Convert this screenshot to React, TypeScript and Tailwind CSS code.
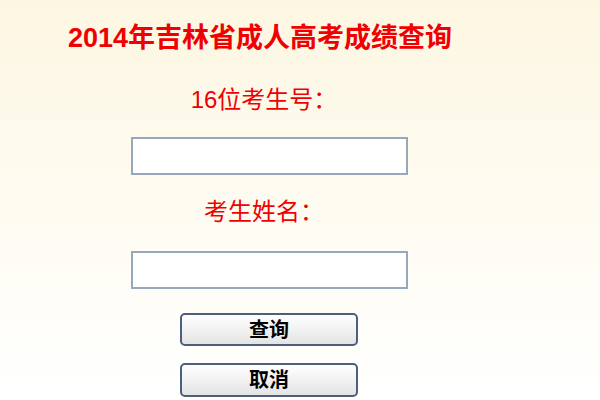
import React from 'react';

const cjk = '"Liberation Sans", "Noto Sans CJK SC", sans-serif';

const Field: React.FC<{ label: string; className?: string; gap?: string }> = ({ label, className, gap }) => (
  <div className={`flex flex-col items-center ${className ?? ''}`}>
    <div className="mr-[10px] text-[24px] leading-[28px] text-[#f00000]">{label}</div>
    <input
      type="text"
      className={`${gap ?? 'mt-[23px]'} h-[38px] w-[277px] border-2 border-[#97a8bb] bg-white outline-none`}
    />
  </div>
);

const Btn: React.FC<{ text: string; className?: string }> = ({ text, className }) => (
  <button
    className={`flex w-[178px] items-center justify-center rounded-[5px] border-2 border-[#4c5f7e] bg-gradient-to-b from-white to-[#e4e4e4] text-[20px] leading-none font-semibold text-black ${className ?? ''}`}
  >
    {text}
  </button>
);

export default function App() {
  return (
    <div
      className="h-[400px] w-[600px] bg-gradient-to-b from-[#fdf7e2] to-white"
      style={{ fontFamily: cjk }}
    >
      <div className="flex w-[538px] flex-col items-center">
        <h1 className="mt-[22px] mr-[18px] text-[27px] leading-[32px] font-bold text-[#f00000]">
          2014年吉林省成人高考成绩查询
        </h1>
        <Field label="16位考生号：" className="mt-[32px]" />
        <Field label="考生姓名：" className="mt-[23px]" gap="mt-[25px]" />
        <div className="mt-[24px] flex flex-col gap-[17px]">
          <Btn text="查询" className="h-[33px]" />
          <Btn text="取消" className="h-[34px]" />
        </div>
      </div>
    </div>
  );
}
